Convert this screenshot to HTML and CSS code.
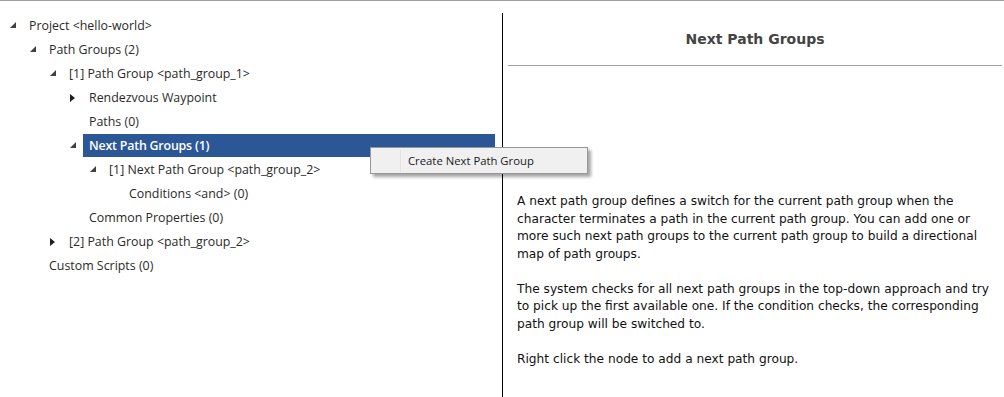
FILE: index.html
```html
<!DOCTYPE html>
<html lang="en">
<head>
    <meta charset="UTF-8">
    <title>Path Groups</title>
    <link rel="stylesheet" href="styles.css">
</head>
<body>
    <div class="main">
        <div class="tree">
            <div class="row lvl0"><span class="exp open"></span><span class="label">Project &lt;hello-world&gt;</span></div>
            <div class="row lvl1"><span class="exp open"></span><span class="label">Path Groups (2)</span></div>
            <div class="row lvl2"><span class="exp open"></span><span class="label">[1] Path Group &lt;path_group_1&gt;</span></div>
            <div class="row lvl3"><span class="exp closed"></span><span class="label">Rendezvous Waypoint</span></div>
            <div class="row lvl3"><span class="exp"></span><span class="label">Paths (0)</span></div>
            <div class="row lvl3 selected"><span class="exp open"></span><span class="label">Next Path Groups (1)</span></div>
            <div class="row lvl4"><span class="exp open"></span><span class="label">[1] Next Path Group &lt;path_group_2&gt;</span></div>
            <div class="row lvl5"><span class="exp"></span><span class="label">Conditions &lt;and&gt; (0)</span></div>
            <div class="row lvl3"><span class="exp"></span><span class="label">Common Properties (0)</span></div>
            <div class="row lvl2"><span class="exp closed"></span><span class="label">[2] Path Group &lt;path_group_2&gt;</span></div>
            <div class="row lvl1"><span class="exp"></span><span class="label">Custom Scripts (0)</span></div>
        </div>

        <div class="detail">
            <h2>Next Path Groups</h2>
            <div class="desc">
                <p>A next path group defines a switch for the current path group when the character terminates a path in the current path group. You can add one or more such next path groups to the current path group to build a directional map of path groups.</p>
                <p>The system checks for all next path groups in the top-down approach and try to pick up the first available one. If the condition checks, the corresponding path group will be switched to.</p>
                <p>Right click the node to add a next path group.</p>
            </div>
        </div>
    </div>

    <div class="context-menu">
        <div class="menu-item"><span class="menu-icon"></span><span class="menu-text">Create Next Path Group</span></div>
    </div>
</body>
</html>
```

FILE: styles.css
```css
body {
    margin: 0;
    padding: 0;
    background-color: #fff;
    border-top: 1px solid #a0a0a0;
    height: 396px;
    overflow: hidden;
}

.main {
    display: flex;
    height: 396px;
}

.tree {
    width: 502px;
    padding-top: 13px;
    font-family: "Open Sans", "Noto Sans", sans-serif;
    font-size: 12.4px;
    color: #2a2a2a;
}

.row {
    display: flex;
    align-items: center;
    height: 24px;
}

.lvl0 { padding-left: 9px; }
.lvl1 { padding-left: 29px; }
.lvl2 { padding-left: 49px; }
.lvl3 { padding-left: 69px; }
.lvl4 { padding-left: 89px; }
.lvl5 { padding-left: 109px; }

.exp {
    width: 20px;
    height: 10px;
    position: relative;
    flex-shrink: 0;
}

.exp.open::before {
    content: "";
    position: absolute;
    left: 1px;
    top: 1px;
    width: 0;
    height: 0;
    border-left: 6px solid transparent;
    border-bottom: 6px solid #404040;
}

.exp.closed::before {
    content: "";
    position: absolute;
    left: 1px;
    top: 1px;
    width: 0;
    height: 0;
    border-top: 4px solid transparent;
    border-bottom: 4px solid transparent;
    border-left: 5px solid #1e1e1e;
}

.label {
    white-space: nowrap;
    line-height: 24px;
}

.selected .label {
    flex: 1;
    line-height: 23px;
    margin-bottom: 1px;
    margin-left: -6px;
    padding-left: 6px;
    margin-right: 7px;
    background-color: #2b5797;
    color: #fff;
    font-weight: 600;
    letter-spacing: -0.2px;
}

.detail {
    flex: 1;
    margin-top: 12px;
    border-left: 1px solid #000;
    font-family: "DejaVu Sans", Verdana, sans-serif;
}

.detail h2 {
    margin: 0 2px 0 5px;
    height: 52px;
    line-height: 53px;
    text-align: center;
    font-size: 14px;
    font-weight: bold;
    color: #444;
    border-bottom: 1px solid #a0a0a0;
}

.desc {
    padding: 127px 3px 0 14px;
    font-size: 12.2px;
    line-height: 17.5px;
    color: #111;
}

.desc p {
    margin: 0 0 17.5px 0;
}

.context-menu {
    position: absolute;
    left: 370px;
    top: 147px;
    width: 216px;
    height: 25px;
    background-color: #f0f0f0;
    border: 1px solid #979797;
    box-shadow: 3px 3px 3px rgba(0, 0, 0, 0.35);
    font-family: "Open Sans", "Noto Sans", sans-serif;
    font-size: 11.3px;
    color: #1a1a1a;
}

.menu-item {
    display: flex;
    height: 25px;
    align-items: center;
}

.menu-icon {
    width: 29px;
    height: 22px;
    border-right: 1px solid #e2e2e2;
    margin-right: 7px;
}
```
